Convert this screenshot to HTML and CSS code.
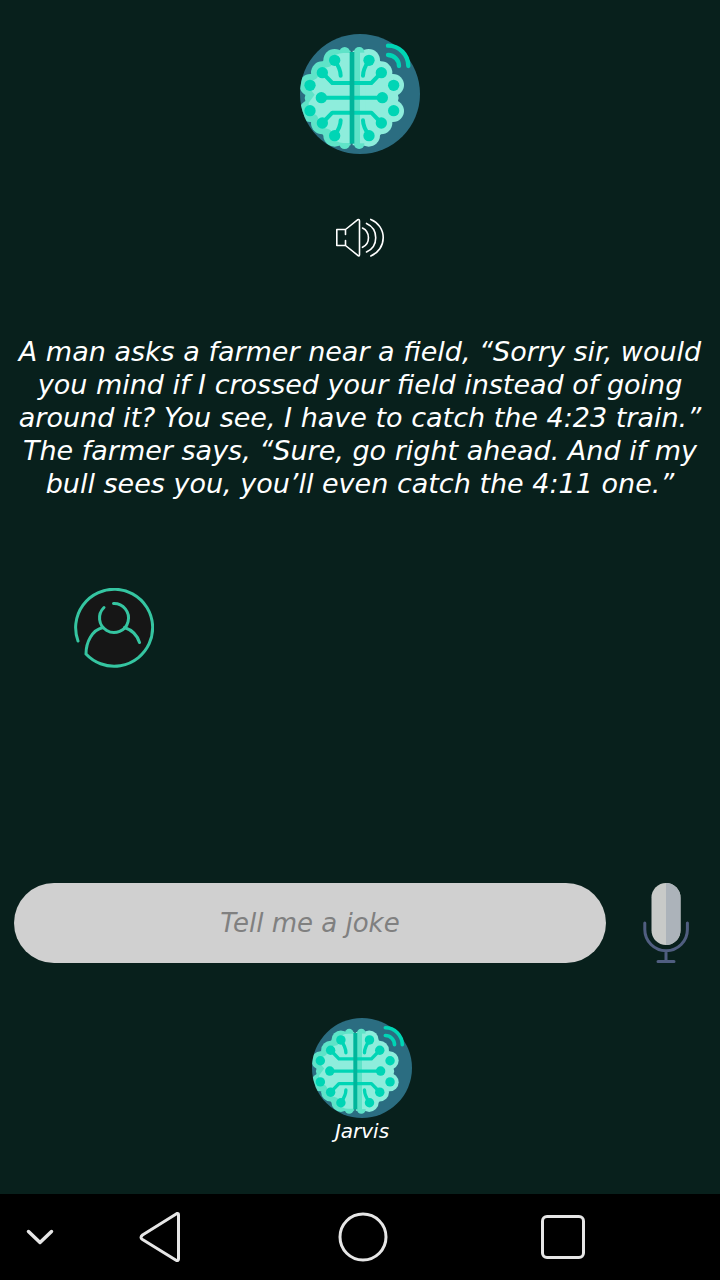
FILE: index.html
```html
<!DOCTYPE html>
<html lang="en">
<head>
<meta charset="utf-8">
<meta name="viewport" content="width=device-width, initial-scale=1">
<title>Jarvis</title>
<link rel="stylesheet" href="styles.css">
</head>
<body>
<svg class="sprite" aria-hidden="true">
  <defs>
    <clipPath id="disc"><circle cx="210" cy="210" r="180"/></clipPath>
    <clipPath id="left-half"><rect x="30" y="60" width="150" height="330"/></clipPath>
    <g id="lobes">
      <circle cx="61" cy="183" r="33"/><circle cx="97" cy="146" r="34"/><circle cx="134" cy="109" r="34"/>
      <circle cx="61" cy="261" r="33"/><circle cx="97" cy="297" r="34"/><circle cx="134" cy="334" r="34"/>
      <path d="M61 150H182V294H61L44 222ZM97 113L134 80H182V364H134L97 331Z"/>
    </g>
    <g id="traces" fill="none" stroke="#00d5b5" stroke-width="12" stroke-linecap="round" stroke-linejoin="round">
      <path d="M134 110Q152 135 152 155M134 334Q152 309 152 289M97 146L127 177H182M94 221H182M97 297L127 266H182"/>
      <g fill="#00d5b5" stroke="none"><circle cx="134" cy="109" r="17"/><circle cx="97" cy="146" r="17"/><circle cx="60" cy="184" r="17"/><circle cx="94" cy="221" r="17"/><circle cx="60" cy="260" r="17"/><circle cx="97" cy="297" r="17"/><circle cx="134" cy="335" r="17"/></g>
    </g>
  </defs>
  <symbol id="brain" viewBox="30 30 360 360">
    <circle cx="210" cy="210" r="180" fill="#2b6d81"/>
    <g clip-path="url(#disc)">
      <g fill="#5fe3c8"><use href="#lobes"/><rect x="148" y="69" width="32" height="306" rx="16"/></g>
      <g clip-path="url(#left-half)" fill="#8eeddc"><path d="M180 87H160Q134 87 126 108Q132 128 112 130Q88 132 86 154Q84 164 64 172Q56 178 56 190L74 212L56 236V254Q60 268 78 272Q84 276 86 290Q92 312 112 314Q130 318 126 336Q136 357 160 357H180Z"/></g>
      <use href="#lobes" transform="matrix(-1 0 0 1 370 0)" fill="#8eeddc"/>
      <rect x="192" y="69" width="31" height="306" rx="15" fill="#5fe3c8"/>
      <rect x="210" y="86" width="16" height="272" fill="#8eeddc"/>
      <use href="#traces"/>
      <use href="#traces" transform="matrix(-1 0 0 1 371 0)"/>
      <rect x="179" y="84" width="14" height="275" fill="#00b59b"/>
    </g>
    <path d="M294 65A61 61 0 0 1 355 126M294 93A33 33 0 0 1 327 126" fill="none" stroke="#00d5b5" stroke-width="13" stroke-linecap="round"/>
  </symbol>
</svg>

<main class="assistant">
  <svg class="logo" role="img" aria-label="Jarvis logo"><use href="#brain"/></svg>

  <button class="icon-button speaker" type="button" aria-label="Read aloud">
    <svg width="50" height="40" viewBox="0 0 50 40" fill="none" stroke="#fff" stroke-width="1.6" stroke-linecap="round" stroke-linejoin="round">
      <path d="M10.500 16.500V11.500H1.800V27.500H10.500V22.500M10.500 11.500L22.500 1.800Q24.500 .8 24.500 3V36.500Q24.500 39 22.500 37.200L10.500 27.500"/>
      <path d="M27.500 10A10.800 10.800 0 0 1 27.500 29.300M31.500 5.400A15.700 15.700 0 0 1 31.500 34M35.800 1.400A19.700 19.700 0 0 1 35.800 38"/>
    </svg>
  </button>

  <p class="reply">A man asks a farmer near a field, “Sorry sir, would<br> you mind if I crossed your field instead of going<br> around it? You see, I have to catch the 4:23 train.”<br> The farmer says, “Sure, go right ahead. And if my<br> bull sees you, you’ll even catch the 4:11 one.”</p>

  <div class="user">
    <svg width="80" height="80" viewBox="0 0 80 80" role="img" aria-label="You">
      <path d="M4 53A38.500 38.500 0 1 1 12 66Z" fill="#161616"/>
      <g fill="none" stroke="#35c5a1" stroke-width="3" stroke-linecap="round">
        <path d="M4 53A38.500 38.500 0 1 1 12 66C12 54 18 42 29 39.500M50.500 39.500C58 42 63.500 48 65.500 54.500"/>
        <path d="M30 19.500A14.500 14.500 0 1 0 39.500 15.500"/>
      </g>
    </svg>
  </div>

  <form class="ask">
    <input class="ask-field" type="text" placeholder="Tell me a joke" aria-label="Ask Jarvis">
    <button class="icon-button" type="button" aria-label="Speak">
      <svg width="48" height="80" viewBox="0 0 48 80">
        <rect x="9.500" y="0" width="29" height="62" rx="14.500" fill="#c8cac8"/>
        <path d="M24 0A14.500 14.500 0 0 1 38.500 14.500V47.500A14.500 14.500 0 0 1 24 62Z" fill="#acb3ba"/>
        <path d="M2.800 40V46.500A21.300 21.300 0 0 0 45.400 46.500V40M24 68V78M16 78.500H32" fill="none" stroke="#505e80" stroke-width="3" stroke-linecap="round"/>
      </svg>
    </button>
  </form>

  <button class="launcher" type="button">
    <svg class="launcher-logo" aria-hidden="true"><use href="#brain"/></svg>
    <span>Jarvis</span>
  </button>
</main>

<nav class="system-bar" aria-label="System navigation">
  <button class="icon-button" type="button" aria-label="Hide bar">
    <svg width="28" height="18" viewBox="0 0 28 18"><path d="M2.500 3.500L14 14.500L25.500 3.500" fill="none" stroke="#e6e6e6" stroke-width="3.500" stroke-linecap="round" stroke-linejoin="round"/></svg>
  </button>
  <button class="icon-button" type="button" aria-label="Back">
    <svg width="42" height="52" viewBox="0 0 42 52"><path d="M38 2.500Q39.500 2 39.500 4V48Q39.500 50 37.500 49.500L3.500 28.500Q.5 26.500 3.500 24Z" fill="none" stroke="#e6e6e6" stroke-width="3" stroke-linejoin="round"/></svg>
  </button>
  <button class="icon-button" type="button" aria-label="Home">
    <svg width="50" height="50" viewBox="0 0 50 50"><circle cx="25" cy="25" r="23" fill="none" stroke="#e6e6e6" stroke-width="3"/></svg>
  </button>
  <button class="icon-button" type="button" aria-label="Recent apps">
    <svg width="44" height="44" viewBox="0 0 44 44"><rect x="1.500" y="1.500" width="41" height="41" rx="4.500" fill="none" stroke="#e6e6e6" stroke-width="3"/></svg>
  </button>
</nav>
</body>
</html>
```
FILE: styles.css
```css
* {
  box-sizing: border-box;
}

body {
  margin: 0;
  min-height: 100vh;
  display: flex;
  flex-direction: column;
  background: #08201c;
  color: #fff;
  font-family: "DejaVu Sans", sans-serif;
  font-style: italic;
}

.sprite {
  position: absolute;
  width: 0;
  height: 0;
}

svg {
  display: block;
}

button,
input {
  font: inherit;
  color: inherit;
  border: 0;
  padding: 0;
  background: none;
}

.icon-button {
  display: grid;
  place-items: center;
}

.assistant {
  flex: 1;
  display: flex;
  flex-direction: column;
  align-items: center;
  padding: 34px 14px 50px;
}

.logo {
  width: 120px;
  height: 120px;
}

.speaker {
  margin-top: 64px;
}

.reply {
  margin: 77px 0 0;
  font-size: 27px;
  line-height: 33px;
  text-align: center;
}

.user {
  align-self: stretch;
  margin: 88px 60px 0;
}

.ask {
  align-self: stretch;
  display: flex;
  gap: 36px;
  margin-top: auto;
  padding-right: 16px;
}

.ask-field {
  flex: 1;
  min-width: 0;
  height: 80px;
  border-radius: 40px;
  background: #d0d0d0;
  color: #333;
  font-size: 26px;
  text-align: center;
}

.ask-field::placeholder {
  color: #808080;
  opacity: 1;
}

.launcher {
  display: flex;
  flex-direction: column;
  align-items: center;
  margin: 55px 0 0 4px;
  font-size: 20px;
  line-height: 26px;
}

.launcher-logo {
  width: 100px;
  height: 100px;
}

.system-bar {
  display: grid;
  grid-template-columns: 80fr 160fr 246fr 154fr 80fr;
  height: 86px;
  background: #000;
}
```
